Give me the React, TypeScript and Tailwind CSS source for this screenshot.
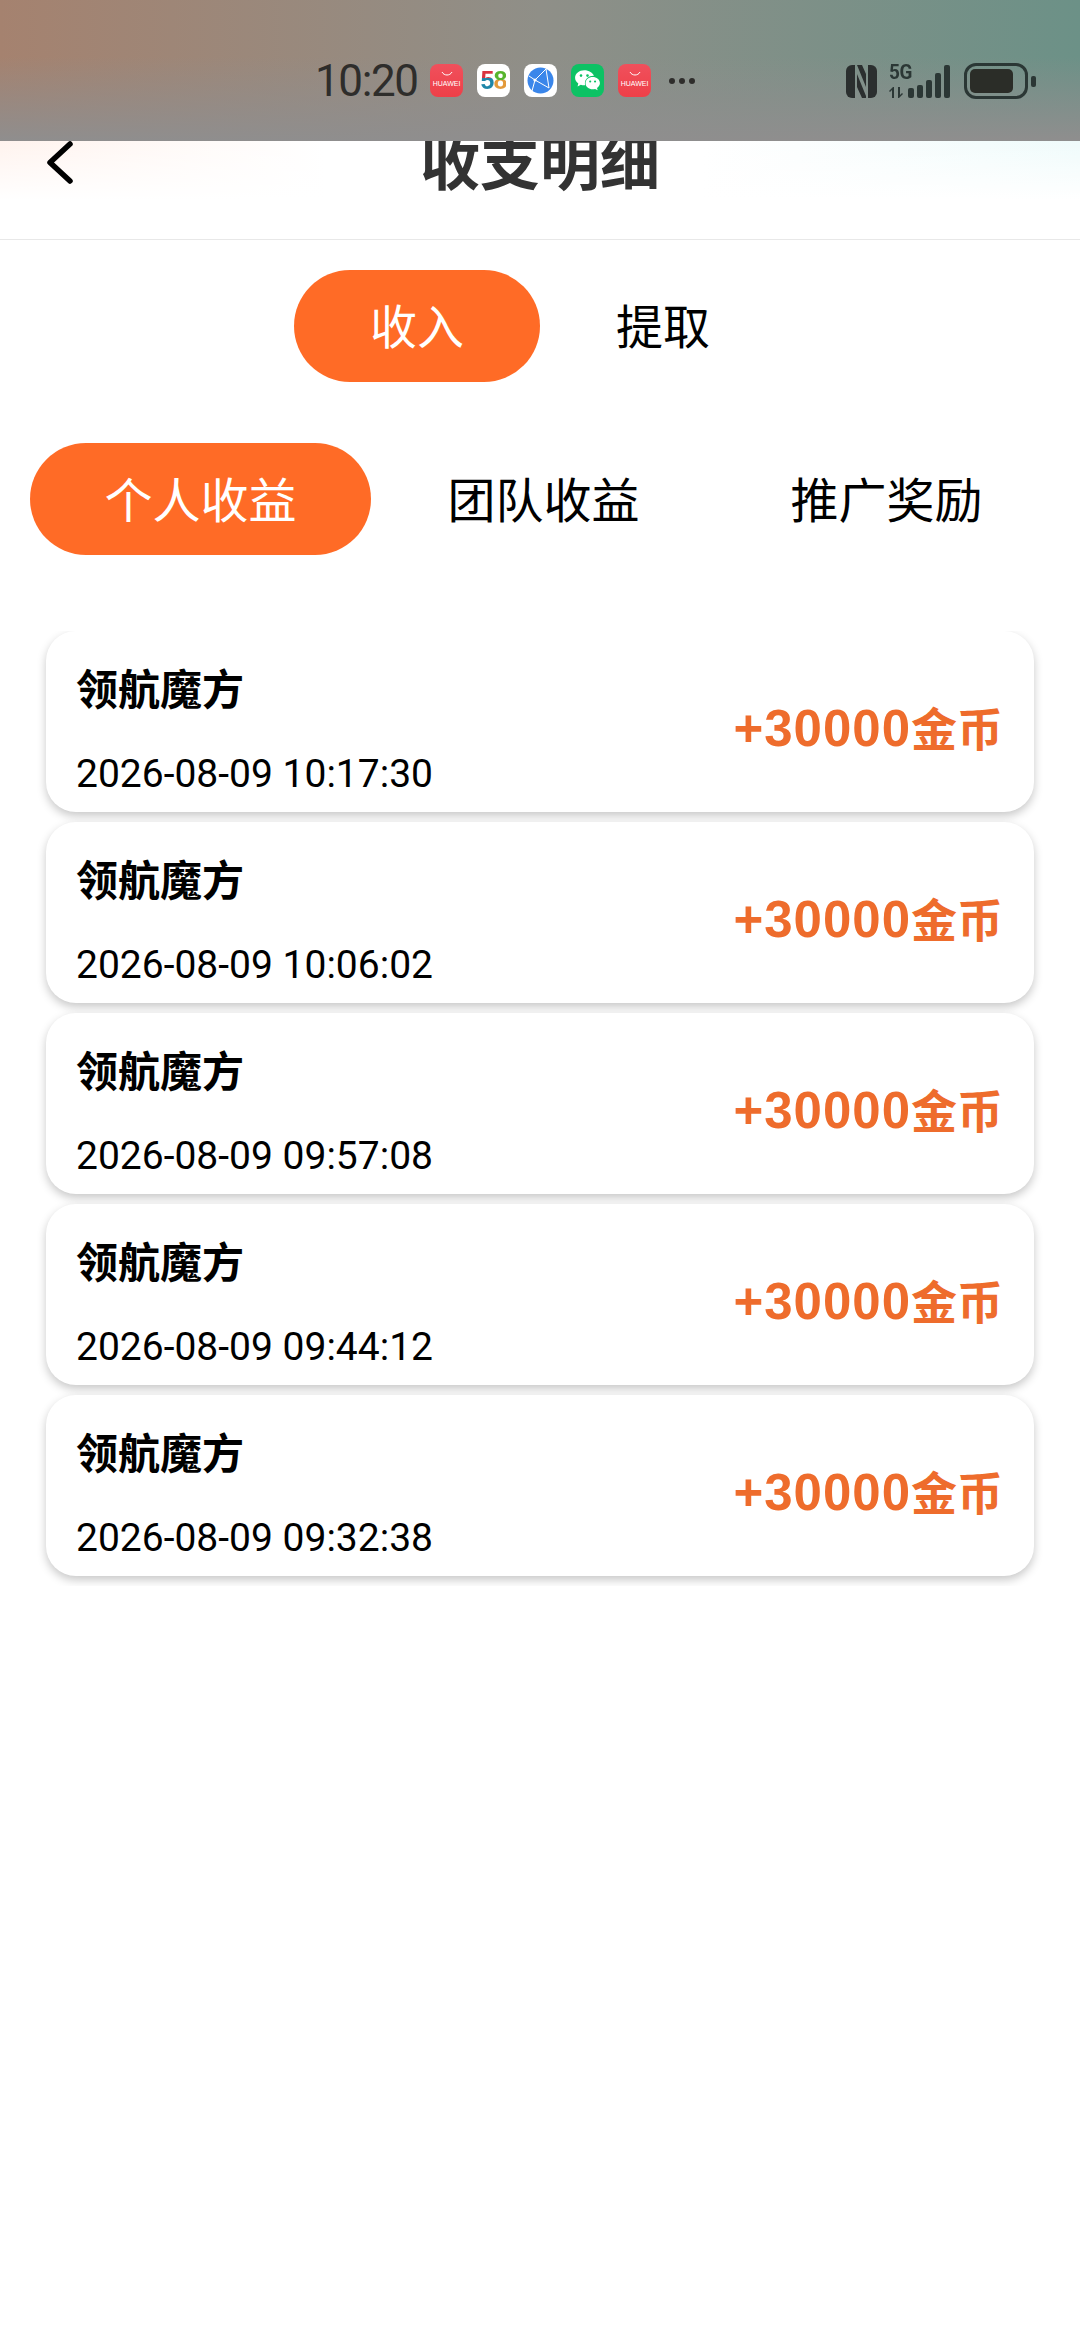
import React from 'react';

const records = ['10:17:30', '10:06:02', '09:57:08', '09:44:12', '09:32:38'];

const HuaweiIcon: React.FC = () => (
  <div className="w-[33px] h-[33px] rounded-[8px] bg-gradient-to-b from-[#f0505c] to-[#ee3f48] flex flex-col items-center justify-center">
    <svg width="14" height="6" viewBox="0 0 14 6" fill="none" className="mb-[3px]">
      <path d="M2 1c2 4 8 4 10 0" stroke="#fff" strokeWidth="1" />
    </svg>
    <span className="text-[7px] leading-[7px] text-white font-['Liberation_Sans'] mb-[4px]">HUAWEI</span>
  </div>
);

const Icon58: React.FC = () => (
  <div className="w-[33px] h-[33px] rounded-[8px] bg-white flex items-center justify-center font-['Liberation_Sans'] font-bold text-[25px] leading-[25px] tracking-[-1px]">
    <span className="bg-[linear-gradient(180deg,#d8343f_0%,#d8343f_40%,#1f86a8_40%,#1f86a8_100%)] bg-clip-text text-transparent">5</span>
    <span className="bg-[linear-gradient(180deg,#58b52e_0%,#58b52e_48%,#e39a3b_48%,#e39a3b_100%)] bg-clip-text text-transparent">8</span>
  </div>
);

const GlobeIcon: React.FC = () => (
  <div className="w-[33px] h-[33px] rounded-[8px] bg-white flex items-center justify-center">
    <svg width="27" height="27" viewBox="0 0 27 27">
      <circle cx="13.5" cy="13.5" r="13" fill="#3a86ea" />
      <path d="M19 2L8 13l14 8M8 13L2 9M8 13l-3 11M19 2l3 19" stroke="#fff" strokeWidth="1" fill="none" />
      <circle cx="8" cy="13" r="1.600" fill="#fff" />
    </svg>
  </div>
);

const WechatIcon: React.FC = () => (
  <div className="w-[33px] h-[33px] rounded-[8px] bg-[#0cc264] flex items-center justify-center">
    <svg width="27" height="24" viewBox="0 0 25 22">
      <path d="M9.500 1C4.800 1 1 4.100 1 8c0 2.200 1.200 4 3 5.300L3.300 16l3-1.500c1 .3 2.100.5 3.200.5.300 0 .6 0 .9 0-.2-.7-.3-1.300-.3-2 0-3.800 3.500-6.800 7.800-6.800h.6C17.500 3.300 13.800 1 9.500 1z" fill="#fff" />
      <path d="M24 13c0-3.200-3.100-5.600-6.700-5.600S10.700 9.800 10.700 13s3 5.600 6.600 5.600c.8 0 1.500-.1 2.200-.3l2.400 1.300-.6-2.200c1.600-1.100 2.700-2.700 2.700-4.400z" fill="#fff" />
      <circle cx="6.500" cy="6" r="1.200" fill="#0cc264" />
      <circle cx="12.500" cy="6" r="1.200" fill="#0cc264" />
      <circle cx="15" cy="11.500" r="1" fill="#0cc264" />
      <circle cx="19.500" cy="11.500" r="1" fill="#0cc264" />
    </svg>
  </div>
);

const StatusBar: React.FC = () => (
  <div className="absolute top-0 left-0 w-full h-[141px] z-10 bg-[linear-gradient(180deg,rgba(142,142,142,0)_40%,#8f8e8e_100%),linear-gradient(90deg,#a5826f_0%,#8f8f88_50%,#6c9187_100%)] flex items-start pt-[62px] pl-[315px] text-[#2e2d2b]">
    <span className="w-[102px] text-[44px] leading-[38px] font-['Roboto'] tracking-[-1.4px] mr-[13px]">10:20</span>
    <div className="flex items-center gap-[14px] mt-[2px]">
      <HuaweiIcon />
      <Icon58 />
      <GlobeIcon />
      <WechatIcon />
      <HuaweiIcon />
    </div>
    <div className="flex gap-[4px] ml-[18px] mt-[16px]">
      <div className="w-[6px] h-[6px] rounded-full bg-[#2e2d2b]" />
      <div className="w-[6px] h-[6px] rounded-full bg-[#2e2d2b]" />
      <div className="w-[6px] h-[6px] rounded-full bg-[#2e2d2b]" />
    </div>
    <div className="flex items-center ml-[151px] mt-[1px]">
      <svg width="31" height="33" viewBox="0 0 31 33" fill="#2b2f2f">
        <path d="M6 0h3v33H6a6 6 0 0 1-6-6V6a6 6 0 0 1 6-6z" />
        <path d="M22 0h3a6 6 0 0 1 6 6v21a6 6 0 0 1-6 6h-3z" />
        <path d="M11 0h5l4 9v13zM11 9l9 22v2h-4l-5-11z" />
      </svg>
      <div className="relative w-[19px] h-[34px] ml-[12px]">
        <span className="absolute top-[-3px] left-0 text-[21px] leading-[22px] font-bold font-['Roboto'] tracking-[-0.5px] text-[#2b3735] scale-x-90 origin-left">5G</span>
        <svg width="14" height="11" viewBox="0 0 14 11" fill="#2b3735" className="absolute top-[23px] left-0">
          <path d="M3 11V3L1 5 0 4l4-4h1v11zM9 0h2v8l2-2 1 1-4 4H9z" />
        </svg>
      </div>
      <div className="flex items-end gap-[3px] h-[34px]">
        <div className="w-[6px] h-[10px] rounded-[2px] bg-[#2b3735]" />
        <div className="w-[6px] h-[13px] rounded-[2px] bg-[#2b3735]" />
        <div className="w-[6px] h-[18px] rounded-[2px] bg-[#2b3735]" />
        <div className="w-[6px] h-[25px] rounded-[2px] bg-[#2b3735]" />
        <div className="w-[6px] h-[33px] rounded-[2px] bg-[#2b3735]" />
      </div>
      <div className="w-[64px] h-[36px] ml-[14px] rounded-[12px] border-[3px] border-[#2b3735] p-[3px]">
        <div className="w-[43px] h-full rounded-[5px] bg-[#2b2d28]" />
      </div>
      <div className="w-[5px] h-[11px] ml-[3px] rounded-[2px] bg-[#2b3735]" />
    </div>
  </div>
);

const App: React.FC = () => {
  return (
    <div className="relative min-h-[2340px] bg-white overflow-hidden font-['Noto_Sans_CJK_SC',sans-serif]">
      <StatusBar />

      {/* Header */}
      <div className="relative h-[240px] border-b border-[#e8e8e8] bg-[linear-gradient(180deg,rgba(255,255,255,0)_141px,#ffffff_200px),linear-gradient(90deg,#fff3ee_0%,#ffffff_30%,#ffffff_65%,#effbfb_100%)]">
        <svg width="30" height="46" viewBox="0 0 30 46" fill="none" className="absolute left-[45px] top-[140px]">
          <path d="M25 4L5 22.500 25 41" stroke="#000" strokeWidth="5.500" strokeLinecap="round" strokeLinejoin="round" />
        </svg>
        <h1 className="pt-[124px] text-center text-[60px] leading-[70px] font-bold text-[#333333]">收支明细</h1>
      </div>

      {/* Tabs */}
      <div className="flex justify-center mt-[30px]">
        <div className="w-[246px] h-[112px] pb-[4px] rounded-[56px] bg-[#ff6b26] text-white text-[47px] flex items-center justify-center">收入</div>
        <div className="w-[246px] h-[112px] pb-[4px] text-black text-[47px] flex items-center justify-center">提取</div>
      </div>
      <div className="flex pl-[30px] mt-[61px]">
        <div className="w-[341px] h-[112px] pb-[5px] rounded-[56px] bg-[#ff6b26] text-white text-[48px] flex items-center justify-center">个人收益</div>
        <div className="w-[345px] h-[112px] pb-[5px] text-black text-[48px] flex items-center justify-center">团队收益</div>
        <div className="w-[341px] h-[112px] pb-[5px] text-black text-[48px] flex items-center justify-center">推广奖励</div>
      </div>

      {/* Records */}
      <div className="flex flex-col gap-[10px] mt-[76px] px-[46px] pb-[10px] overflow-hidden">
        {records.map((time) => (
          <div
            key={time}
            className="h-[181px] shrink-0 rounded-[30px] bg-white shadow-[0_4px_10px_rgba(0,0,0,0.22)] flex items-center justify-between pl-[30px] pr-[31px]"
          >
            <div className="flex flex-col mt-[14px]">
              <span className="text-[42px] leading-[50px] font-bold text-black">领航魔方</span>
              <span className="mt-[40px] text-[39px] leading-[44px] text-black font-['Roboto',sans-serif]">2026-08-09 {time}</span>
            </div>
            <span className="mt-[16px] text-[51px] leading-[60px] font-bold tracking-[1px] text-[#ee6c2c] font-['Liberation_Sans','Noto_Sans_CJK_SC',sans-serif]">
              +30000<span className="text-[46px] tracking-normal">金币</span>
            </span>
          </div>
        ))}
      </div>
    </div>
  );
};

export default App;
